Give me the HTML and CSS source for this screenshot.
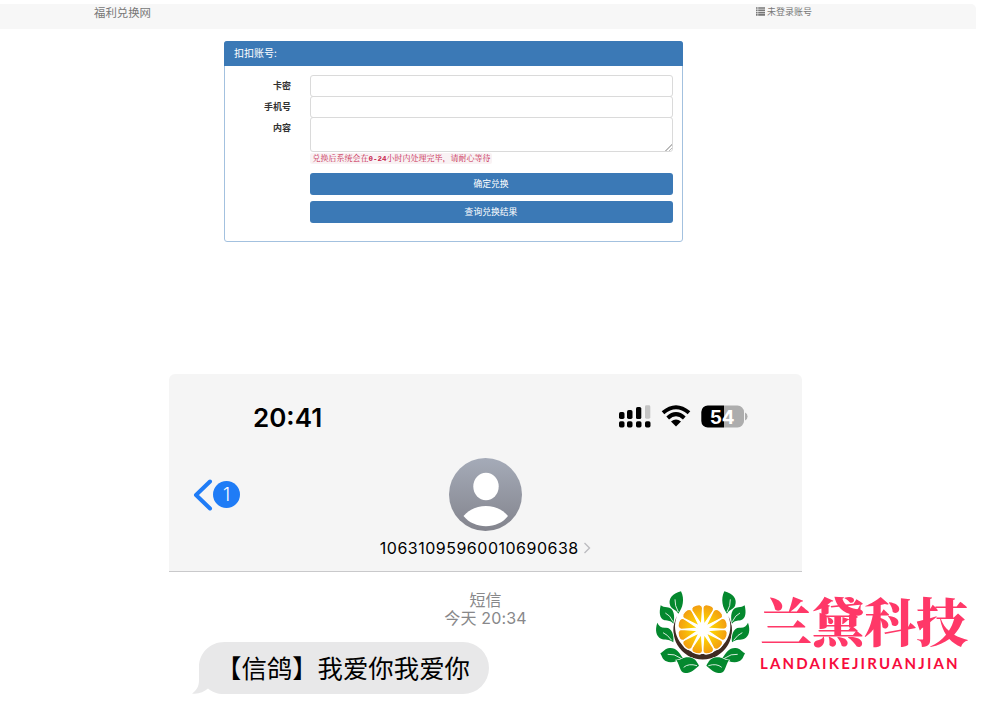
FILE: index.html
```
<!DOCTYPE html>
<html lang="zh-CN">
<head>
<meta charset="utf-8">
<title>福利兑换网</title>
<link rel="stylesheet" href="styles.css">
</head>
<body>
<header class="nav">
  <span class="brand">福利兑换网</span>
  <span class="account">
    <svg class="list-icon" viewBox="0 0 9 9"><path d="M0 1h1.6M0 3.3h1.6M0 5.6h1.6M0 7.9h1.6M2.2 1H9M2.2 3.3H9M2.2 5.6H9M2.2 7.9H9" stroke="#777" stroke-width="1.6"/></svg>
    <span>未登录账号</span>
  </span>
</header>
<main>
  <section class="panel">
    <h1 class="panel-head">扣扣账号:</h1>
    <form class="form">
      <label for="card">卡密</label><input id="card" class="field">
      <label for="phone">手机号</label><input id="phone" class="field">
      <label for="content">内容</label><textarea id="content" class="field area"></textarea>
      <div class="actions">
        <code class="hint">兑换后系统会在<b>0-24</b>小时内处理完毕，请耐心等待</code>
        <button type="button" class="btn">确定兑换</button>
        <button type="button" class="btn">查询兑换结果</button>
      </div>
    </form>
  </section>
  <section class="phone">
    <div class="phone-head">
      <div class="status">
        <span class="time">20:41</span>
        <svg class="status-icons" viewBox="0 0 130 24">
          <g fill="#000"><rect x="0" y="7" width="5.5" height="7" rx="1.7"/><rect x="8" y="5" width="5.5" height="9" rx="1.7"/><rect x="17" y="2" width="5.3" height="12" rx="1.6"/><rect x="0" y="16.2" width="5.5" height="6.2" rx="1.7"/><rect x="8" y="16.2" width="5.5" height="6.2" rx="1.7"/><rect x="17" y="16.2" width="5.5" height="6.2" rx="1.7"/><rect x="26" y="16.2" width="5.5" height="6.2" rx="1.7"/></g>
          <rect x="26" y="0.3" width="5.3" height="13.4" rx="1.4" fill="#c4c4c4"/>
          <g fill="none" stroke="#000" stroke-width="4"><path d="M44 7.8Q57-3.3 70 7.8"/><path d="M48.700 13Q57 5.400 65.300 13"/></g>
          <path d="M52 16.600Q57 12.600 62 16.600L57 21.500Z"/>
          <path d="M105 .5h13.500a6.500 6.500 0 0 1 6.500 6.500v9a6.500 6.500 0 0 1-6.500 6.500H105z" fill="#adadad"/>
          <path d="M105 .5H89A6.500 6.500 0 0 0 82.300 7v9A6.500 6.500 0 0 0 89 22.500h16z"/>
          <path d="M126 7.500q2.600 1 2.600 4t-2.600 4z" fill="#adadad"/>
          <text x="103.200" y="18.500" class="battery-text" text-anchor="middle" textLength="25">54</text>
        </svg>
      </div>
      <div class="contact-row">
        <div class="back"><svg class="chevron" viewBox="0 0 20 32"><path d="M17 2.500 3 16 17 29.500" fill="none" stroke="#1f7cf6" stroke-width="4" stroke-linecap="round" stroke-linejoin="round"/></svg><span class="count">1</span></div>
        <svg class="avatar" viewBox="0 0 73 73">
          <defs><linearGradient id="grey" x2="0" y2="1"><stop stop-color="#a5abb8"/><stop offset="1" stop-color="#83848d"/></linearGradient></defs>
          <circle cx="36.500" cy="36.500" r="36.500" fill="url(#grey)"/>
          <ellipse cx="37" cy="28.500" rx="12.700" ry="13.700" fill="#fff"/>
          <path d="M14.500 58C26 44.500 48 44.500 59 58 49 71.500 25 71.500 14.500 58Z" fill="#fff"/>
        </svg>
      </div>
      <div class="number"><span>10631095960010690638</span><svg viewBox="0 0 8 12"><path d="m1.500 1 5 5-5 5" fill="none" stroke="#bcbcc0" stroke-width="1.400"/></svg></div>
    </div>
    <div class="stamp"><div>短信</div><div class="when">今天 20:34</div></div>
    <div class="message">
      <svg class="bubble-shape" viewBox="0 0 298 52"><path d="M32.500 0H271a26 26 0 0 1 0 52H32C25 52 20 50 16 46.500 12 50 6 52.500 0 51.500 5 48 7 44 7 38V25C7 11 18 0 32.500 0Z" fill="#e8e8e9"/></svg>
      <span class="message-text">【信鸽】我爱你我爱你</span>
    </div>
  </section>
</main>
<aside class="logo">
  <svg viewBox="0 0 345 300" class="emblem">
    <defs>
      <radialGradient id="orange" gradientUnits="userSpaceOnUse" cx="173" cy="148" r="76"><stop offset=".2" stop-color="#ffdf00"/><stop offset="1" stop-color="#f29a12"/></radialGradient>
      <path id="slice" d="M173 134 156.500 86Q155 78 163 74 173 71 183 74 191 78 189.500 86Z"/>
      <g id="branch">
        <path d="M108 34C82 41 68 57 76 78 81 88 92 88 100 101 113 84 120 58 108 34Z"/>
        <path d="M47 76C42 98 43 116 59 121 70 123 76 121 85 131 91 108 87 83 66 82 58 81 52 80 47 76Z"/>
        <path d="M37 128C29 151 34 169 48 176 59 181 72 176 85 187 88 164 80 142 62 143 49 144 41 138 37 128Z"/>
        <path d="M46 220C59 213 59 205 74 204 94 203 102 216 114 235 98 244 78 251 64 244 53 240 51 229 46 220Z"/>
        <path d="M94 241C109 240 114 231 131 232 150 233 155 245 162 257 150 267 139 279 120 279 103 277 106 257 94 241Z"/>
      </g>
      <path id="veins" d="M90 58Q89 77 100 96M61 99Q75 105 84 125M54 158Q67 163 80 181M68 223Q87 220 108 235M116 262Q131 249 156 257"/>
    </defs>
    <path d="M96 108A88 88 0 1 0 250 108 83 83 0 1 1 96 108Z" fill="#402b22"/>
    <g fill="url(#orange)" stroke="#fff" stroke-width="4"><use href="#slice" transform="rotate(15 173 148)"/><use href="#slice" transform="rotate(45 173 148)"/><use href="#slice" transform="rotate(75 173 148)"/><use href="#slice" transform="rotate(105 173 148)"/><use href="#slice" transform="rotate(135 173 148)"/><use href="#slice" transform="rotate(165 173 148)"/><use href="#slice" transform="rotate(195 173 148)"/><use href="#slice" transform="rotate(225 173 148)"/><use href="#slice" transform="rotate(255 173 148)"/><use href="#slice" transform="rotate(285 173 148)"/><use href="#slice" transform="rotate(315 173 148)"/><use href="#slice" transform="rotate(345 173 148)"/></g>
    <g class="leaves" fill="#04882e" stroke="#fff" stroke-width="4"><use href="#branch"/><use href="#branch" transform="translate(346 0) scale(-1 1)"/></g>
    <g fill="none" stroke="#fff" stroke-width="2.500"><use href="#veins"/><use href="#veins" transform="translate(346 0) scale(-1 1)"/></g>
  </svg>
  <div class="logo-words"><div class="logo-name">兰黛科技</div><div class="logo-latin">LANDAIKEJIRUANJIAN</div></div>
</aside>
</body>
</html>
```
FILE: styles.css
```
* { box-sizing: border-box; }
body { margin: 0; width: 1000px; height: 707px; overflow: hidden; background: #fff; padding-top: 4px; font-family: "Noto Sans CJK SC", sans-serif; }
.nav { width: 976px; height: 25px; padding: 0 164px 0 94px; background: #f7f7f7; border-top-right-radius: 5px; display: flex; justify-content: space-between; color: #777; }
.brand { font-size: 11.4px; line-height: 16px; }
.account { display: flex; gap: 2px; font-size: 9px; line-height: 16px; }
.list-icon { width: 9px; height: 9px; margin-top: 3px; }
.panel { width: 459px; height: 201px; margin: 12px 0 0 224px; border: 1px solid #a3c1df; border-radius: 3px; }
.panel-head { margin: -1px -1px 0; height: 25px; padding-left: 10px; background: #3b79b6; border-radius: 3px 3px 0 0; color: #fff; font-size: 10px; font-weight: 400; line-height: 24px; }
.form { display: grid; grid-template-columns: 66px 363px; column-gap: 18.500px; grid-template-rows: 21.500px 21px 35px auto; padding-top: 8.500px; }
.form label { text-align: right; font-size: 9px; font-weight: 700; line-height: 21px; color: #333; }
.field { display: block; width: 363px; height: 22px; margin: 0; padding: 0; border: 1px solid #dadada; border-radius: 3px; background: #fff; }
.area { height: 35px; resize: vertical; }
.area::-webkit-resizer { background: linear-gradient(135deg, transparent 76%, #bbb 76% 80%, transparent 80% 88%, #bbb 88% 92%, transparent 92%); }
.actions { grid-column: 2; display: flex; flex-direction: column; align-items: flex-start; }
.hint { height: 11px; margin: 1px 0 9px; padding: 0 3px; width: 182px; border-radius: 2px; background: #f9f2f4; color: #c7254e; font: 8px/10px "Noto Serif CJK SC", "Noto Sans CJK SC", serif; white-space: nowrap; }
.hint b { font-family: "Liberation Mono", monospace; font-size: 7.500px; }
.btn { width: 363px; height: 22px; margin: 0 0 6px; padding: 0; border: 0; border-radius: 3px; background: #3b79b6; color: #fff; font: 8.800px/20px "Noto Sans CJK SC", sans-serif; }
.phone { width: 633px; margin: 132px 0 0 169px; }
.phone-head { height: 198px; padding-top: 31px; border-bottom: 1px solid #c9c9cb; border-radius: 6px 6px 0 0; background: #f5f5f5; }
.status { height: 53px; display: flex; justify-content: space-between; padding: 0 53px 0 84px; }
.time { font: 600 26px/26px Inter, sans-serif; }
.status-icons { width: 130px; height: 24px; }
.battery-text { font: 700 19px Inter, sans-serif; fill: #fff; }
.contact-row { height: 73px; display: grid; grid-template-columns: 280px 73px; align-items: center; }
.back { display: flex; align-items: center; padding-left: 24px; }
.chevron { width: 20px; height: 32px; }
.count { width: 27px; height: 27px; border-radius: 50%; background: #1f7cf6; color: #fff; font: 300 18px/27px Inter, sans-serif; text-align: center; }
.avatar { width: 73px; height: 73px; }
.number { height: 33px; display: flex; align-items: center; justify-content: center; gap: 4.500px; font: 16px/20px Inter, sans-serif; letter-spacing: .5px; }
.number svg { width: 8px; height: 12px; }
.stamp { padding-top: 18px; text-align: center; color: #88888a; font-size: 16px; line-height: 19px; }
.when { font-family: Inter, "Noto Sans CJK SC", sans-serif; letter-spacing: .15px; }
.message { width: 298px; height: 52px; margin: 14px 0 0 23px; display: grid; }
.bubble-shape { grid-area: 1 / 1; width: 298px; height: 52px; }
.message-text { grid-area: 1 / 1; z-index: 1; padding-left: 24px; font-size: 25.400px; line-height: 51px; white-space: nowrap; }
.logo { position: absolute; left: 645px; top: 580px; display: flex; }
.emblem { width: 115px; height: 100px; }
.leaves { paint-order: stroke; }
.logo-words { padding-top: 13px; }
.logo-name { height: 57px; font: 900 52px/54px "Noto Serif CJK SC", "Noto Sans CJK SC", serif; color: #ff3868; white-space: nowrap; }
.logo-latin { font: 700 15px/27px Lato, sans-serif; color: #f70c3d; letter-spacing: 2.170px; }
```
